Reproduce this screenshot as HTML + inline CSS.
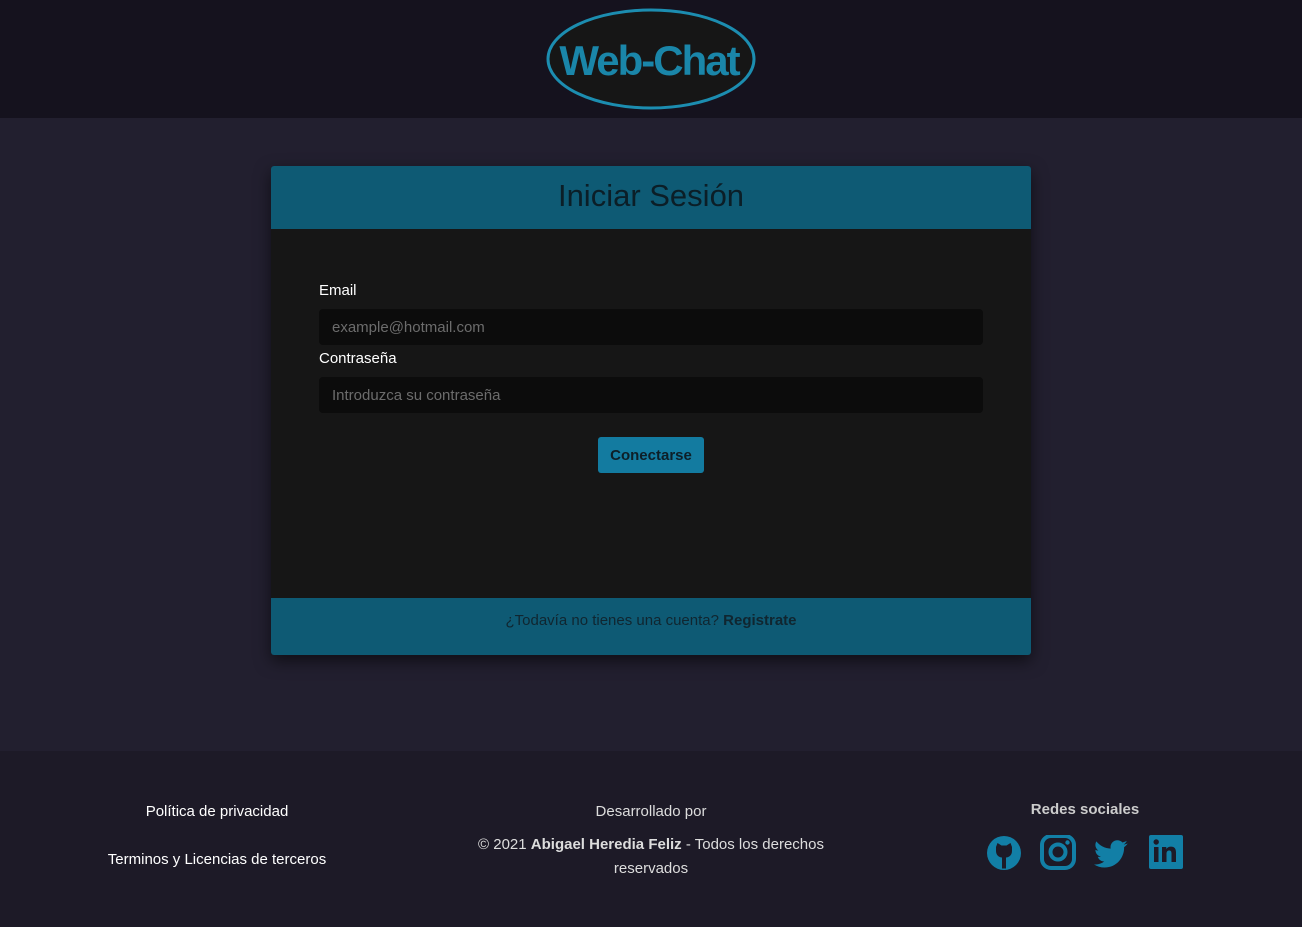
<!DOCTYPE html>
<html><head><meta charset="utf-8"><style>
*{margin:0;padding:0;box-sizing:border-box}
body{width:1302px;height:927px;background:#221f2f;font-family:"Liberation Sans",sans-serif;position:relative;overflow:hidden}
.top{position:absolute;left:0;top:0;width:1302px;height:118px;background:#15121e}
.card{position:absolute;left:271px;top:166px;width:760px;height:489px;background:#161616;border-radius:3px;box-shadow:0 6px 16px rgba(0,0,0,.55);overflow:hidden}
.ch{height:63px;background:#0e5a74;text-align:center;font-size:31px;color:#0b1e27;line-height:60px}
.cf{position:absolute;left:0;bottom:0;width:760px;height:57px;background:#0e5a74;text-align:center;font-size:15px;color:#102630;line-height:46px}
label{position:absolute;left:48px;color:#fff;font-size:15px}
.in{position:absolute;left:48px;width:664px;height:36px;background:#0c0c0c;border-radius:4px;color:#6c6c6c;font-size:15px;line-height:38px;padding-left:13px}
.btn{position:absolute;left:327px;top:271px;width:106px;height:36px;background:#137ba0;border-radius:3px;color:#0d1f28;font-weight:bold;font-size:15px;text-align:center;line-height:38px}
.foot{position:absolute;left:0;top:751px;width:1302px;height:176px;background:#1d1a27;color:#fff;font-size:15px}
.foot div{position:absolute;text-align:center}
</style></head><body>
<div class="top">
<svg width="1302" height="118"><ellipse cx="651" cy="59" rx="103" ry="49" fill="#161616" stroke="#1c8db0" stroke-width="3"/>
<text x="649" y="75" text-anchor="middle" font-family="Liberation Sans, sans-serif" font-weight="bold" font-size="42" fill="#1a86a9" letter-spacing="-2">Web-Chat</text></svg>
</div>
<div class="card">
<div class="ch">Iniciar Sesión</div>
<label style="top:116px">Email</label>
<div class="in" style="top:143px">example@hotmail.com</div>
<label style="top:184px">Contraseña</label>
<div class="in" style="top:211px">Introduzca su contraseña</div>
<div class="btn">Conectarse</div>
<div class="cf">¿Todavía no tienes una cuenta? <b>Registrate</b></div>
</div>
<div class="foot">
<div style="left:100px;width:234px;top:52px">Política de privacidad</div>
<div style="left:90px;width:254px;top:100px">Terminos y Licencias de terceros</div>
<div style="left:451px;width:400px;top:52px;color:#ddd">Desarrollado por</div>
<div style="left:451px;width:400px;top:82px;color:#ddd;line-height:24px">© 2021 <b>Abigael Heredia Feliz</b> - Todos los derechos<br>reservados</div>
<div style="left:985px;width:200px;top:50px;color:#ccc;font-weight:bold">Redes sociales</div>
<svg style="position:absolute;left:985px;top:84px" width="200" height="36" fill="#127fa6">
<circle cx="19" cy="18" r="17"/><path d="M11 12 l1.5 -4 l4 2.5 h5 l4 -2.5 l1.5 4 v4 c0 4 -3 6.5 -6 6.5 v11 h-4 v-11 c-3 0 -6 -2.5 -6 -6.5z" fill="#1d1a27"/>
<rect x="57" y="1" width="32" height="32" rx="9" fill="none" stroke="#127fa6" stroke-width="4"/><circle cx="73" cy="17" r="7.5" fill="none" stroke="#127fa6" stroke-width="4"/><circle cx="82.5" cy="7.5" r="2.2"/>
<g transform="translate(109,2) scale(1.4)"><path d="M24 4.6c-.9.4-1.8.6-2.8.8 1-.6 1.8-1.6 2.2-2.7-1 .6-2 1-3.1 1.2C19.4 2.9 18.1 2.3 16.7 2.3c-2.7 0-4.9 2.2-4.9 4.9 0 .4 0 .8.1 1.1C7.8 8.1 4.1 6.1 1.7 3.1c-.4.7-.7 1.6-.7 2.5 0 1.7.9 3.2 2.2 4.1-.8 0-1.6-.2-2.2-.6v.1c0 2.4 1.7 4.4 3.9 4.8-.4.1-.8.2-1.3.2-.3 0-.6 0-.9-.1.6 2 2.4 3.4 4.6 3.4-1.7 1.3-3.8 2.1-6.1 2.1H0c2.2 1.4 4.8 2.2 7.5 2.2 9.1 0 14-7.5 14-14v-.6c1-.7 1.8-1.6 2.5-2.5z"/></g>
<rect x="164" y="0" width="34" height="34" rx="2"/><rect x="169" y="12" width="4.5" height="15" fill="#1d1a27"/><circle cx="171.2" cy="7" r="2.7" fill="#1d1a27"/><path d="M177 12h4.3v2c1-1.6 2.6-2.4 4.7-2.4 3.5 0 5 2 5 6V27h-4.5v-8.5c0-2-.7-3-2.3-3-1.8 0-2.7 1.2-2.7 3.3V27H177z" fill="#1d1a27"/>
</svg>
</div>
</body></html>
